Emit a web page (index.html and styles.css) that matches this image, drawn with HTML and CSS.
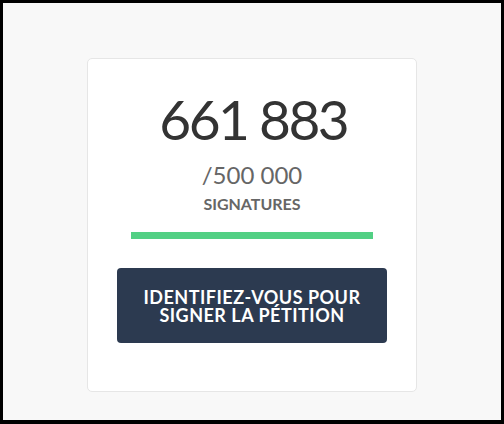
FILE: index.html
```html
<!DOCTYPE html>
<html lang="fr">
<head>
<meta charset="utf-8">
<title>Pétition</title>
<link rel="stylesheet" href="styles.css">
</head>
<body>
<div class="frame">
  <div class="card">
    <div class="count">661 883</div>
    <div class="goal">/500 000</div>
    <div class="label">Signatures</div>
    <div class="progress"><div class="progress-fill" style="width:100%"></div></div>
    <button class="cta"><span class="cta-line">Identifiez-vous pour</span><span class="cta-line">signer la pétition</span></button>
  </div>
</div>
</body>
</html>
```
FILE: styles.css
```css
html, body {
  margin: 0;
  padding: 0;
}
.frame {
  width: 504px;
  height: 424px;
  box-sizing: border-box;
  border: 3px solid #000;
  border-bottom-width: 4px;
  background: #f8f8f8;
  padding-top: 55px;
  font-family: Lato, "Noto Sans", sans-serif;
}
.card {
  width: 330px;
  margin: 0 auto;
  box-sizing: border-box;
  background: #fff;
  border: 1px solid #e6e6e6;
  border-radius: 5px;
  padding: 32px 0 48px;
  display: flex;
  flex-direction: column;
  align-items: center;
}
.count {
  font-size: 55px;
  line-height: 56px;
  letter-spacing: -2.5px;
  padding-left: 2.5px;
  color: #333;
}
.goal {
  margin-top: 16px;
  font-size: 24px;
  line-height: 24px;
  color: #666;
}
.label {
  margin-top: 9px;
  font-size: 16px;
  line-height: 16px;
  font-weight: 700;
  color: #666;
  text-transform: uppercase;
}
.progress {
  margin-top: 20px;
  width: 242px;
  height: 7px;
  background: #e8e8e8;
}
.progress-fill {
  height: 100%;
  background: #52d084;
}
.cta {
  margin-top: 29px;
  width: 270px;
  height: 75px;
  border: none;
  border-radius: 4px;
  background: #2c3a50;
  color: #fff;
  font-family: inherit;
  font-size: 18px;
  font-weight: 700;
  letter-spacing: 0.5px;
  text-transform: uppercase;
  padding: 0;
  display: flex;
  flex-direction: column;
  align-items: center;
  justify-content: center;
}
.cta-line {
  display: block;
  line-height: 18px;
  height: 18px;
}
```
